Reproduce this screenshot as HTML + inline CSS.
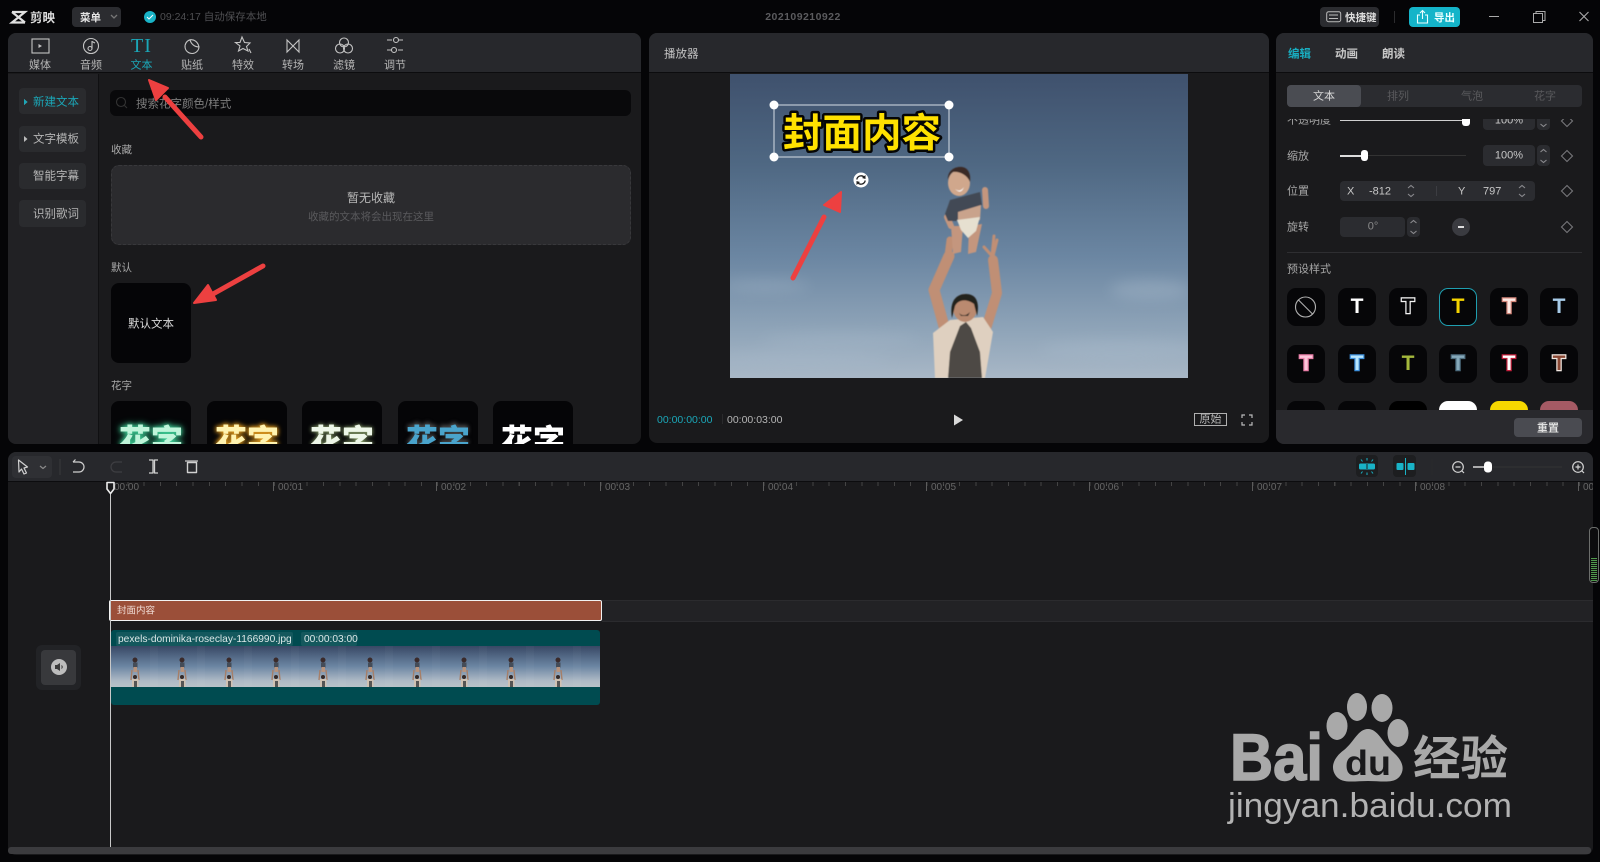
<!DOCTYPE html>
<html lang="zh-CN"><head><meta charset="utf-8"><title>剪映</title>
<style>
html,body{margin:0;padding:0;width:1600px;height:862px;overflow:hidden;background:#050507;font-family:"Liberation Sans","Noto Sans CJK SC",sans-serif;color:#c8c8c8}
div,span{position:absolute;box-sizing:border-box}
.c{transform:translate(-50%,-50%);white-space:nowrap;line-height:1;margin-top:1px}
.l{transform:translateY(-50%);white-space:nowrap;line-height:1;margin-top:1px}
.n{margin-top:0}
.p{background:#1a1a1c;border-radius:8px;overflow:hidden}
.h{background:#27282c;left:0;right:0;top:0;height:40px;border-bottom:1px solid #0c0c0e}
.sb{left:19px;width:67px;background:#2a2b2e;border-radius:4px}
.card{top:401px;width:80px;height:80px;background:#050507;border-radius:8px}
.f{font-size:32px;font-weight:900;left:40px;top:22px;white-space:nowrap;transform:translateX(-50%);line-height:1;font-family:"Noto Sans CJK SC",sans-serif}
.in{background:#2b2c30;border-radius:4px}
.tile{width:38px;height:38px;background:#060608;border-radius:9px;font-size:21px;font-weight:bold;line-height:38px;text-align:center;paint-order:stroke fill}
.lab{top:488px;font-size:10px;color:#666;line-height:1;transform:translateY(-50%)}
.maj{top:482px;width:1px;height:9px;background:#5c5c5c}
svg{position:absolute;left:0;top:0;overflow:visible}
</style></head><body>

<!-- top bar -->
<svg width="28" height="20" style="left:10px;top:7px"><g fill="none" stroke="#e0e0e0" stroke-width="2.2"><path d="M2 5H15L2 15.500H15"/><path d="M2 5L15 15.500"/></g></svg>
<span class="l" style="left:30px;top:16.500px;font-size:12.5px;font-weight:bold;color:#ddd">剪映</span>
<div style="left:72px;top:7px;width:49px;height:20px;background:#2b2c30;border-radius:4px"></div>
<span class="l" style="left:80px;top:16.500px;font-size:10.5px;font-weight:bold;color:#e4e4e4">菜单</span>
<svg width="10" height="6" style="left:110px;top:14px"><path d="M1 1L4 4L7 1" fill="none" stroke="#777" stroke-width="1.3"/></svg>
<div style="left:144px;top:11px;width:12px;height:12px;border-radius:50%;background:#19b3c7"></div>
<svg width="8" height="8" style="left:146px;top:13px"><path d="M1 4L3 6L7 2" fill="none" stroke="#fff" stroke-width="1"/></svg>
<span class="l" style="left:160px;top:16px;font-size:10.5px;color:#4f4f52">09:24:17 自动保存本地</span>
<span class="c n" style="left:803px;top:16.500px;font-size:10.5px;font-weight:bold;color:#5b5b5e;letter-spacing:.45px">202109210922</span>

<div style="left:1320px;top:7px;width:59px;height:20px;background:#2b2c30;border-radius:4px"></div>
<svg width="16" height="12" style="left:1326px;top:11px"><rect x=".7" y=".7" width="14" height="10" rx="2" fill="none" stroke="#bbb" stroke-width="1"/><path d="M3 4H12M3 7.500H12" stroke="#bbb" stroke-width="1"/></svg>
<span class="l" style="left:1345px;top:16.500px;font-size:10.5px;font-weight:bold;color:#ddd">快捷键</span>
<div style="left:1394px;top:11px;width:1px;height:12px;background:#2c2c2e"></div>
<div style="left:1409px;top:7px;width:51px;height:20px;background:#14b4c9;border-radius:4px"></div>
<svg width="14" height="16" style="left:1416px;top:9px"><path d="M4 6H1.500V14H11.500V6H9M6.500 10V1.500M4 4L6.500 1.500L9 4" fill="none" stroke="#eaffff" stroke-width="1.100"/></svg>
<span class="l" style="left:1434px;top:16.500px;font-size:10.5px;font-weight:bold;color:#eaffff">导出</span>
<svg width="120" height="14" style="left:1485px;top:10px"><g fill="none" stroke="#aaa" stroke-width="1"><path d="M4 6.500H14"/><rect x="48.500" y="3.500" width="9" height="9"/><path d="M51 3V1.500H60V10.500H58"/><path d="M94.500 2L103.500 11M103.500 2L94.500 11" stroke-width="1.100"/></g></svg>

<!-- left panel -->
<div class="p" style="left:8px;top:33px;width:633px;height:411px">
  <div class="h"></div>
  <div style="left:0;top:41px;width:91px;height:370px;background:#212124;border-right:1px solid #101012"></div>
</div>
<!-- tabs -->
<svg width="430" height="40" style="left:0;top:33px"><g fill="none" stroke="#c4c4c4" stroke-width="1.100">
  <rect x="32" y="6" width="17" height="14" />
  <path d="M38.500 11V15L42 13Z" fill="#c4c4c4" stroke="none"/>
  <circle cx="91" cy="13" r="7.500"/><path d="M92 8V15.500" /><circle cx="90" cy="15.500" r="2"/><path d="M92 8.500L95 10"/>
  <path d="M190 6.800A7 7 0 1 0 199 14C194.500 14 191 11 190 6.800ZM190 6.800C194 6 198 9 199 14"/>
  <path d="M242 4L244.500 9.500L250 10L246.500 13.500L248 18L243 15.500L238.500 18L240 13L235.500 9.500L240 9.500Z"/><path d="M249 16L251 20"/>
  <path d="M287 7V19L293 13ZM299 7V19L293 13Z"/>
  <circle cx="344" cy="9.500" r="4.500"/><circle cx="340" cy="15.500" r="4.500"/><circle cx="348" cy="15.500" r="4.500"/>
  <path d="M387 7H392M399 7H403M387 17H391M398 17H403"/><circle cx="396" cy="7" r="2.500"/><circle cx="394" cy="17" r="2.500"/>
</g></svg>
<span class="c n" style="left:141.500px;top:46px;font-size:20px;color:#1ba7b8;font-family:'Liberation Serif',serif;letter-spacing:1px">TI</span>
<span class="c n" style="left:40px;top:65.500px;font-size:11px;color:#b5b5b5">媒体</span>
<span class="c n" style="left:91px;top:65.500px;font-size:11px;color:#b5b5b5">音频</span>
<span class="c n" style="left:141.500px;top:65.500px;font-size:11px;color:#1ba7b8">文本</span>
<span class="c n" style="left:192px;top:65.500px;font-size:11px;color:#b5b5b5">贴纸</span>
<span class="c n" style="left:243px;top:65.500px;font-size:11px;color:#b5b5b5">特效</span>
<span class="c n" style="left:293px;top:65.500px;font-size:11px;color:#b5b5b5">转场</span>
<span class="c n" style="left:344px;top:65.500px;font-size:11px;color:#b5b5b5">滤镜</span>
<span class="c n" style="left:395px;top:65.500px;font-size:11px;color:#b5b5b5">调节</span>
<!-- sidebar -->
<div class="sb" style="top:88px;height:26px"></div>
<div class="sb" style="top:126px;height:26px"></div>
<div class="sb" style="top:163px;height:26px"></div>
<div class="sb" style="top:200px;height:27px"></div>
<svg width="6" height="120" style="left:24px;top:0"><path d="M0 99V105L3.500 102ZM0 136V142L3.500 139Z" fill="#bbb"/><path d="M0 99V105L3.500 102Z" fill="#1ba7b8"/></svg>
<span class="l" style="left:33px;top:102px;font-size:11.500px;color:#1ba7b8">新建文本</span>
<span class="l" style="left:33px;top:139px;font-size:11.500px;color:#b5b5b5">文字模板</span>
<span class="l" style="left:33px;top:176px;font-size:11.500px;color:#b5b5b5">智能字幕</span>
<span class="l" style="left:33px;top:213.500px;font-size:11.500px;color:#b5b5b5">识别歌词</span>
<!-- search -->
<div style="left:110px;top:90px;width:521px;height:26px;background:#09090b;border-radius:6px"></div>
<svg width="14" height="14" style="left:115px;top:96px"><circle cx="6" cy="6" r="4.500" fill="none" stroke="#333" stroke-width="1.100"/><path d="M9.500 9.500L12 12" stroke="#333" stroke-width="1.100"/></svg>
<span class="l" style="left:136px;top:103.500px;font-size:11.500px;color:#7d7d7d">搜索花字颜色/样式</span>
<span class="l" style="left:111px;top:148.500px;font-size:10.500px;color:#a8a8a8">收藏</span>
<div style="left:111px;top:165px;width:520px;height:80px;background:#2b2b2e;border-radius:8px;border:1px dashed #38383b"></div>
<span class="c" style="left:371px;top:196.500px;font-size:12px;color:#b8b8b8">暂无收藏</span>
<span class="c" style="left:371px;top:215.500px;font-size:10.500px;color:#5a5a5d">收藏的文本将会出现在这里</span>
<span class="l" style="left:111px;top:266.500px;font-size:10.500px;color:#a8a8a8">默认</span>
<div style="left:111px;top:283px;width:80px;height:80px;background:#050507;border-radius:8px"></div>
<span class="c" style="left:151px;top:323.500px;font-size:11.500px;color:#d8d8d8">默认文本</span>
<span class="l n" style="left:111px;top:386px;font-size:10.500px;color:#a8a8a8">花字</span>
<!-- flower cards clipped -->
<div style="left:0;top:395px;width:641px;height:49px;overflow:hidden">
 <div class="card" style="left:111px;top:6px"><span class="f" style="color:#bff5da;text-shadow:0 0 5px #3fd49a,0 0 8px #3fd49a">花字</span></div>
 <div class="card" style="left:207px;top:6px"><span class="f" style="color:#fff3b0;text-shadow:0 0 4px #e8a020,0 0 6px #e8a020">花字</span></div>
 <div class="card" style="left:302px;top:6px"><span class="f" style="color:#edf6e8;text-shadow:0 0 4px #a5c080">花字</span></div>
 <div class="card" style="left:398px;top:6px"><span class="f" style="color:#4aa4cc;text-shadow:0 -2px 4px #555">花字</span></div>
 <div class="card" style="left:493px;top:6px"><span class="f" style="color:#fff">花字</span></div>
</div>

<!-- player -->
<div class="p" style="left:649px;top:33px;width:620px;height:410px"><div class="h"></div></div>
<span class="l" style="left:664px;top:54px;font-size:11.500px;color:#c4c4c4">播放器</span>
<svg width="1600" height="862" style="left:0;top:0;width:1600px;height:862px">
 <defs>
  <linearGradient id="sky" x1="0" y1="0" x2="0" y2="1">
   <stop offset="0" stop-color="#3f516d"/><stop offset=".3" stop-color="#4f6883"/><stop offset=".6" stop-color="#6b86a2"/><stop offset=".85" stop-color="#90a5b9"/><stop offset="1" stop-color="#a8b7c6"/>
  </linearGradient>
  <clipPath id="ph"><rect x="730" y="74" width="458" height="304"/></clipPath>
  <filter id="bl"><feGaussianBlur stdDeviation="7"/></filter>
  <filter id="b1"><feGaussianBlur stdDeviation=".5"/></filter>
 </defs>
 <rect x="730" y="74" width="458" height="304" fill="url(#sky)"/>
 <g clip-path="url(#ph)">
  <g filter="url(#bl)" fill="#a8bacb" opacity=".4"><ellipse cx="765" cy="286" rx="45" ry="5"/><ellipse cx="840" cy="340" rx="80" ry="6"/><ellipse cx="800" cy="360" rx="90" ry="8"/><ellipse cx="1150" cy="290" rx="40" ry="10"/><ellipse cx="1120" cy="350" rx="80" ry="10"/></g>
  <g filter="url(#b1)">
  <!-- man -->
  <g fill="none" stroke="#c08f74" stroke-linecap="round" stroke-linejoin="round">
   <path d="M945 330L934 290L949 256" stroke-width="11"/>
   <path d="M985 332L997 293L993 260" stroke-width="10"/>
   <path d="M992 256L994 236M992 256L984 247M993 256L997 240" stroke-width="3"/>
   <path d="M948 256L950 240" stroke-width="7"/>
  </g>
  <path d="M933 333L950 320L983 317L993 332L985 378H935Z" fill="#dfd0c0"/>
  <path d="M960 326L966 322L971 328L980 352L982 378H948L950 352Z" fill="#4e4a44"/>
  <ellipse cx="965" cy="308" rx="12" ry="14" fill="#ba8a70"/>
  <path d="M952 318C949 300 957 294 966 294C976 294 980 302 977 316L974 304C966 298 958 300 955 306Z" fill="#23201e"/>
  <path d="M959 313Q964 318 970 312L968 316H961Z" fill="#2e2a28"/>
  <!-- baby -->
  <path d="M951 226L963 226L961 252L953 254ZM969 226L982 224L976 252L968 254Z" fill="#c4967e"/>
  <g fill="none" stroke="#c4967e" stroke-linecap="round"><path d="M985 190L986 206" stroke-width="6"/><path d="M947 217L951 226" stroke-width="6"/></g>
  <path d="M945 214L950 200L980 192L982 205L960 213L957 221H948Z" fill="#434a55"/>
  <path d="M958 212L981 205L980 220L958 222Z" fill="#c9a38c"/>
  <path d="M957 220L980 217L976 231L968 238L961 230Z" fill="#e6e0d0"/>
  <ellipse cx="959" cy="183" rx="11" ry="13" fill="#d0a78c"/>
  <path d="M948 180C947 170 956 166 962 167C969 168 971 175 970 182C967 174 958 171 953 172C950 174 949 177 948 180Z" fill="#3b2a26"/>
  <path d="M955 189Q960 193 964 187Q961 195 955 189Z" fill="#fff"/>
  </g>
 </g>
 <!-- text -->
 <text x="783" y="147" font-family="'Noto Sans CJK SC',sans-serif" font-weight="700" font-size="39.500" fill="#ffe100" stroke="#050505" stroke-width="5" style="paint-order:stroke fill" stroke-linejoin="round" textLength="158" lengthAdjust="spacingAndGlyphs">封面内容</text>
 <rect x="774" y="105" width="175" height="52" fill="none" stroke="#d6dde5" stroke-width="1"/>
 <g fill="#fff"><circle cx="774" cy="105" r="4.500"/><circle cx="949" cy="105" r="4.500"/><circle cx="774" cy="157" r="4.500"/><circle cx="949" cy="157" r="4.500"/></g>
 <circle cx="861" cy="180" r="7.500" fill="#fff"/>
 <g fill="none" stroke="#222" stroke-width="1.300"><path d="M856.800 179.500A4.300 4.300 0 0 1 864.300 177.300"/><path d="M865.200 180.500A4.300 4.300 0 0 1 857.700 182.700"/></g>
 <path d="M865.500 175L865.500 179L862 178ZM856.500 185L856.500 181L860 182Z" fill="#222"/>
 <!-- arrows -->
 <g fill="#ed4040" stroke="#ed4040" stroke-linecap="round" stroke-linejoin="round">
  <path d="M793 278L824 217" stroke-width="5"/><path d="M841 192L840 212L824 205Z" stroke-width="2" />
  <path d="M201 137L165 97" stroke-width="5"/><path d="M149 80L168 88L156 100Z" stroke-width="2"/>
  <path d="M263 266L213 294" stroke-width="5"/><path d="M194 303L208 285L216 300Z" stroke-width="2"/>
 </g>
</svg>
<span class="l n" style="left:657px;top:419.500px;font-size:10.500px;color:#1ba7b8">00:00:00:00</span>
<div style="left:722px;top:414px;width:1px;height:10px;background:#2a2a2c"></div>
<span class="l n" style="left:727px;top:419.500px;font-size:10.500px;color:#b5b5b5">00:00:03:00</span>
<svg width="14" height="14" style="left:953px;top:413px"><path d="M1 1.500V12.500L10 7Z" fill="#d8d8d8"/></svg>
<div style="left:1194px;top:413px;width:33px;height:13px;border:1px solid #b0b0b0"></div>
<span class="c n" style="left:1210.500px;top:420px;font-size:11px;color:#b8b8b8">原始</span>
<svg width="13" height="13" style="left:1241px;top:414px"><g fill="none" stroke="#bbb" stroke-width="1.200"><path d="M1 4V1H4M8 1H11V4M1 8V11H4M8 11H11V8"/></g></svg>

<!-- right panel -->
<div class="p" style="left:1276px;top:33px;width:317px;height:411px"><div class="h"></div></div>
<span class="l" style="left:1288px;top:54px;font-size:11.500px;font-weight:bold;color:#19adc0">编辑</span>
<span class="l" style="left:1335px;top:54px;font-size:11.500px;font-weight:bold;color:#c8c8c8">动画</span>
<span class="l" style="left:1382px;top:54px;font-size:11.500px;font-weight:bold;color:#c8c8c8">朗读</span>
<div style="left:1287px;top:85px;width:295px;height:22px;background:#2b2c30;border-radius:4px"></div>
<div style="left:1287px;top:85px;width:74px;height:22px;background:#4a4c52;border-radius:4px"></div>
<span class="c" style="left:1324px;top:96px;font-size:11px;color:#d8d8d8">文本</span>
<span class="c" style="left:1398px;top:96px;font-size:11px;color:#5a5a5d">排列</span>
<span class="c" style="left:1472px;top:96px;font-size:11px;color:#5a5a5d">气泡</span>
<span class="c" style="left:1545px;top:96px;font-size:11px;color:#5a5a5d">花字</span>

<!-- scrolled form (clipped at y=119) -->
<div style="left:1276px;top:119px;width:317px;height:291px;overflow:hidden">
  <div style="left:0;top:-119px;width:317px;height:420px">
   <span class="l" style="left:11px;top:120px;font-size:11px;color:#a8a8a8">不透明度</span>
   <div style="left:64px;top:120px;width:126px;height:1px;background:#d0d0d0"></div>
   <div style="left:186px;top:115px;width:8px;height:11px;background:#fff;border-radius:3px"></div>
   <div class="in" style="left:207px;top:110px;width:52px;height:20px"></div>
   <span class="c" style="left:233px;top:120px;font-size:11px;color:#c8c8c8">100%</span>
   <div class="in" style="left:261px;top:110px;width:13px;height:20px"></div>
   <span class="l" style="left:11px;top:156px;font-size:11px;color:#a8a8a8">缩放</span>
   <div style="left:64px;top:155px;width:126px;height:1px;background:#333"></div>
   <div style="left:64px;top:155px;width:24px;height:2px;background:#ddd"></div>
   <div style="left:85px;top:150px;width:7px;height:11px;background:#fff;border-radius:3px"></div>
   <div class="in" style="left:207px;top:145px;width:52px;height:21px"></div>
   <span class="c n" style="left:233px;top:156px;font-size:11px;color:#c8c8c8">100%</span>
   <div class="in" style="left:261px;top:145px;width:13px;height:21px"></div>
   <span class="l" style="left:11px;top:191px;font-size:11px;color:#a8a8a8">位置</span>
   <div class="in" style="left:64px;top:181px;width:195px;height:20px"></div>
   <span class="l n" style="left:71px;top:192px;font-size:11px;color:#c8c8c8">X</span>
   <span class="l n" style="left:93px;top:192px;font-size:11px;color:#c8c8c8">-812</span>
   <div style="left:160px;top:186px;width:1px;height:10px;background:#3c3d42"></div>
   <span class="l n" style="left:182px;top:192px;font-size:11px;color:#c8c8c8">Y</span>
   <span class="l n" style="left:207px;top:192px;font-size:11px;color:#c8c8c8">797</span>
   <span class="l" style="left:11px;top:227px;font-size:11px;color:#a8a8a8">旋转</span>
   <div class="in" style="left:64px;top:217px;width:65px;height:20px"></div>
   <span class="c n" style="left:97px;top:227px;font-size:11px;color:#8a8a8a">0°</span>
   <div class="in" style="left:131px;top:217px;width:13px;height:20px"></div>
   <div style="left:176px;top:218px;width:18px;height:18px;border-radius:50%;background:#3a3b40"></div>
   <div style="left:182px;top:226px;width:6px;height:2px;background:#ddd"></div>
   <svg width="317" height="260"><g fill="none" stroke="#8a8a8e" stroke-width="1.100">
     <path d="M264.500 116L267.500 113.500L270.500 116M264.500 124L267.500 126.500L270.500 124"/>
     <path d="M264.500 152L267.500 149.500L270.500 152M264.500 160L267.500 162.500L270.500 160"/>
     <path d="M132 188L135 185.500L138 188M132 194L135 196.500L138 194"/>
     <path d="M243 188L246 185.500L249 188M243 194L246 196.500L249 194"/>
     <path d="M134.500 223L137.500 220.500L140.500 223M134.500 231L137.500 233.500L140.500 231"/>
     <g stroke="#77777a"><path d="M291 115.500L296.500 121L291 126.500L285.500 121Z"/><path d="M291 150.500L296.500 156L291 161.500L285.500 156Z"/><path d="M291 185.500L296.500 191L291 196.500L285.500 191Z"/><path d="M291 221.500L296.500 227L291 232.500L285.500 227Z"/></g>
   </g></svg>
   <div style="left:11px;top:252px;width:295px;height:1px;background:#2e2e31"></div>
   <span class="l" style="left:11px;top:269px;font-size:11px;color:#a8a8a8">预设样式</span>
   <!-- row1 -->
   <div class="tile" style="left:11px;top:288px"></div>
   <svg width="37" height="38" style="left:11px;top:288px"><circle cx="18.500" cy="19" r="10" fill="none" stroke="#b0b0b0" stroke-width="1.100"/><path d="M11.500 12L25.500 26" stroke="#b0b0b0" stroke-width="1.100"/></svg>
   <div class="tile" style="left:62px;top:288px;color:#fff">T</div>
   <div class="tile" style="left:113px;top:288px;color:#060608;-webkit-text-stroke:2.400px #f4f4f4">T</div>
   <div class="tile" style="left:163px;top:288px;color:#f5d400;outline:1.500px solid #1f9fb0;outline-offset:-1.500px">T</div>
   <div class="tile" style="left:214px;top:288px;color:#fde9e4;-webkit-text-stroke:2.400px #d28579">T</div>
   <div class="tile" style="left:264px;top:288px;color:#a7cbe8">T</div>
   <!-- row2 -->
   <div class="tile" style="left:11px;top:345px;color:#fbc6da;-webkit-text-stroke:2.400px #ea7fa8">T</div>
   <div class="tile" style="left:62px;top:345px;color:#b8e6fd;-webkit-text-stroke:2.400px #3d8fdb">T</div>
   <div class="tile" style="left:113px;top:345px;color:#a4b83c">T</div>
   <div class="tile" style="left:163px;top:345px;color:#86a9ba;-webkit-text-stroke:2.400px #4d6c7e">T</div>
   <div class="tile" style="left:214px;top:345px;color:#fff;-webkit-text-stroke:2.400px #c4203c">T</div>
   <div class="tile" style="left:264px;top:345px;color:#8a4834;-webkit-text-stroke:2.400px #f2e8e2">T</div>
   <!-- row3 -->
   <div class="tile" style="left:11px;top:401px"></div>
   <div class="tile" style="left:62px;top:401px"></div>
   <div class="tile" style="left:113px;top:401px;background:#000"></div>
   <div class="tile" style="left:163px;top:401px;background:#fff"></div>
   <div class="tile" style="left:214px;top:401px;background:#f7d800"></div>
   <div class="tile" style="left:264px;top:401px;background:#a55a64"></div>
  </div>
</div>
<div style="left:1276px;top:410px;width:317px;height:34px;background:#29292d;border-radius:0 0 8px 8px"></div>
<div style="left:1514px;top:418px;width:68px;height:19px;background:#4a4b51;border-radius:4px"></div>
<span class="c" style="left:1548px;top:428px;font-size:11px;font-weight:bold;color:#e0e0e0">重置</span>

<!-- timeline -->
<div class="p" style="left:8px;top:452px;width:1585px;height:403px">
  <div class="h" style="height:30px;background:#27282c"></div>
</div>
<!-- toolbar -->
<div style="left:12px;top:456px;width:40px;height:22px;background:#2f3034;border-radius:4px"></div>
<svg width="220" height="24" style="left:14px;top:455px"><g fill="none" stroke="#d0d0d0" stroke-width="1.200" stroke-linejoin="round">
  <path d="M4.500 5L13.500 12L10 13L12.500 18L10 19L7.500 14L5 17Z"/>
  <path d="M26 11L29 13.500L32 11" stroke="#8a8a8a"/>
  <path d="M59 7H65A5 5 0 0 1 65 17H59M59 7L61.500 4.500"/>
  <path d="M108 7H102A5 5 0 0 0 102 17H108" stroke="#3e3e42"/>
  <path d="M135 5H139V18H135M144 5H140.500V18H144" stroke-width="1.300"/>
  <path d="M171 6H184"/><rect x="173.500" y="7.500" width="9" height="10" stroke-width="1.400"/>
</g><path d="M46 4V20" stroke="#3a3a3d"/></svg>
<!-- ruler -->
<div style="left:110.500px;top:482px;width:1483px;height:4px;background:repeating-linear-gradient(90deg,#444 0,#444 1px,transparent 1px,transparent 16.310px)"></div>
<div class="maj" style="left:273px"></div><span class="lab" style="left:278px">00:01</span>
<div class="maj" style="left:436px"></div><span class="lab" style="left:441px">00:02</span>
<div class="maj" style="left:600px"></div><span class="lab" style="left:605px">00:03</span>
<div class="maj" style="left:763px"></div><span class="lab" style="left:768px">00:04</span>
<div class="maj" style="left:926px"></div><span class="lab" style="left:931px">00:05</span>
<div class="maj" style="left:1089px"></div><span class="lab" style="left:1094px">00:06</span>
<div class="maj" style="left:1252px"></div><span class="lab" style="left:1257px">00:07</span>
<div class="maj" style="left:1415px"></div><span class="lab" style="left:1420px">00:08</span>
<div class="maj" style="left:1578px"></div><span class="lab" style="left:1583px;width:10px;overflow:hidden">00</span>
<span class="lab" style="left:114px">00:00</span>
<!-- right tools -->
<div style="left:1356px;top:455px;width:22px;height:22px;background:#1d1e20;border-radius:4px"></div>
<div style="left:1393px;top:455px;width:23px;height:22px;background:#1d1e20;border-radius:4px"></div>
<svg width="240" height="24" style="left:1356px;top:455px">
 <rect x="3" y="8.500" width="16" height="6" rx="1.500" fill="#19b3c7"/><path d="M11 9V14" stroke="#1d1e20"/>
 <path d="M11 3V5.500M11 17.500V20M5 4.500L6.500 6.500M17 4.500L15.500 6.500M5 18.500L6.500 16.500M17 18.500L15.500 16.500" stroke="#19b3c7" stroke-width="1"/>
 <rect x="40.500" y="8" width="7" height="7" rx="1" fill="#19b3c7"/><rect x="51.500" y="8" width="7" height="7" rx="1" fill="#19b3c7"/><path d="M49.500 3V20" stroke="#19b3c7"/>
 <path d="M76 4V20" stroke="#2a2a2d"/>
 <g fill="none" stroke="#d4d4d4" stroke-width="1.200"><circle cx="102" cy="12" r="5.300"/><path d="M99.500 12H104.500M106 16L108 18"/><circle cx="222" cy="12" r="5.300"/><path d="M219.500 12H224.500M222 9.500V14.500M226 16L228 18"/></g>
 <path d="M117 12H206" stroke="#333"/><path d="M117 12H132" stroke="#d8d8d8" stroke-width="1.500"/>
 <rect x="128" y="6.500" width="8" height="11" rx="3.500" fill="#fff"/>
</svg>
<!-- tracks -->
<div style="left:602px;top:600px;width:991px;height:22px;background:#222225;border-top:1px solid #2b2b2e;border-bottom:1px solid #2b2b2e"></div>
<div style="left:109px;top:600px;width:493px;height:21px;background:#9b4f39;border:1.500px solid #f2f2f2;border-radius:2px"></div>
<span class="l" style="left:117px;top:609.500px;font-size:9.500px;color:#f0dcd5">封面内容</span>
<div style="left:111px;top:630px;width:489px;height:75px;background:#004b50;border-radius:3px"></div>
<svg width="489" height="41" style="left:111px;top:646px">
 <defs><linearGradient id="s2" x1="0" y1="0" x2="0" y2="1"><stop offset="0" stop-color="#384865"/><stop offset=".5" stop-color="#6c86a3"/><stop offset=".85" stop-color="#aebac6"/><stop offset="1" stop-color="#b9c2c8"/></linearGradient>
 <pattern id="th" x="0" y="0" width="47" height="41" patternUnits="userSpaceOnUse">
  <rect width="47" height="41" fill="url(#s2)"/><rect x="39" width="8" height="41" fill="#fff" opacity=".025"/>
  <circle cx="24" cy="14" r="2.500" fill="#3a2a2a"/><rect x="22" y="16.500" width="4.500" height="5" fill="#444c58"/><rect x="22.500" y="21" width="3.500" height="5" fill="#b8947e"/>
  <path d="M21 24L20 34M27 24L28 34" stroke="#a67f68" stroke-width="1.400" fill="none"/><circle cx="24" cy="31" r="2" fill="#352a28"/><rect x="21" y="33" width="6.500" height="8" fill="#cfc1b2"/><rect x="23" y="35" width="3" height="6" fill="#555"/>
 </pattern></defs>
 <rect width="489" height="41" fill="url(#th)"/>
</svg>
<div style="left:115.500px;top:632px;width:177px;height:14px;background:#14585d;border-radius:2px"></div>
<span class="l n" style="left:118px;top:640px;font-size:10.200px;color:#dbe8e8">pexels-dominika-roseclay-1166990.jpg</span>
<div style="left:301px;top:632px;width:56px;height:14px;background:#14585d;border-radius:2px"></div>
<span class="l n" style="left:304px;top:640px;font-size:10.200px;color:#dbe8e8">00:00:03:00</span>
<div style="left:36px;top:645px;width:45px;height:45px;background:#222326;border-radius:6px"></div>
<div style="left:41px;top:650px;width:35px;height:35px;background:#38393c;border-radius:4px"></div>
<div style="left:51px;top:659px;width:16px;height:16px;border-radius:50%;background:#bdbdbd"></div>
<svg width="12" height="10" style="left:54px;top:662px"><path d="M1 3H3L6 1V9L3 7H1Z" fill="#3a3a3a"/><path d="M7.500 3.500Q9 5 7.500 6.500" fill="none" stroke="#3a3a3a"/></svg>
<!-- playhead -->
<div style="left:110px;top:490px;width:1px;height:357px;background:#c8c8c8"></div>
<svg width="12" height="14" style="left:105px;top:481px"><path d="M2 1.500H9V8L5.500 12.500L2 8Z" fill="#1a1a1c" stroke="#ececec" stroke-width="1.600" stroke-linejoin="round"/></svg>
<!-- scrollbar -->
<div style="left:8px;top:847px;width:1583px;height:7px;background:#3b3b3e;border-radius:3px"></div>
<!-- meter -->
<div style="left:1589px;top:527px;width:10px;height:56px;background:#0c0c0e;border:1px solid #6c6e6c;border-radius:4px"></div>
<div style="left:1591px;top:558px;width:6px;height:23px;background:repeating-linear-gradient(0deg,#4f9a4c 0,#4f9a4c 1px,#111 1px,#111 2px)"></div>

<!-- watermark -->
<svg width="1600" height="862" style="left:0;top:0;width:1600px;height:862px">
 <g fill="#a9a9a9">
  <ellipse cx="1357" cy="707" rx="10" ry="14"/><ellipse cx="1382" cy="708" rx="10.500" ry="14"/>
  <ellipse cx="1337" cy="726" rx="10.500" ry="14"/><ellipse cx="1398" cy="733" rx="10.500" ry="14"/>
  <path d="M1368 729C1378 729 1382 742 1393 752C1403 761 1405 769 1400 776C1394 784 1382 781 1368 781C1354 781 1342 784 1336 776C1330 768 1333 758 1344 750C1354 742 1358 729 1368 729Z"/>
  <text x="1230" y="780" font-family="'Liberation Sans',sans-serif" font-weight="700" font-size="66" stroke="#a9a9a9" stroke-width="1.500" textLength="93" lengthAdjust="spacingAndGlyphs">Bai</text>
  <text x="1413" y="775" font-family="'Noto Sans CJK SC',sans-serif" font-weight="700" font-size="47" textLength="95" lengthAdjust="spacingAndGlyphs">经验</text>
  <text x="1228" y="817" font-family="'Liberation Sans',sans-serif" font-size="34" textLength="284" lengthAdjust="spacingAndGlyphs" fill="#b2b2b2">jingyan.baidu.com</text>
 </g>
 <text x="1345" y="775" font-family="'Liberation Sans',sans-serif" font-weight="700" font-size="35" fill="#1a1a1c" textLength="46" lengthAdjust="spacingAndGlyphs">du</text>
</svg>
</body></html>
